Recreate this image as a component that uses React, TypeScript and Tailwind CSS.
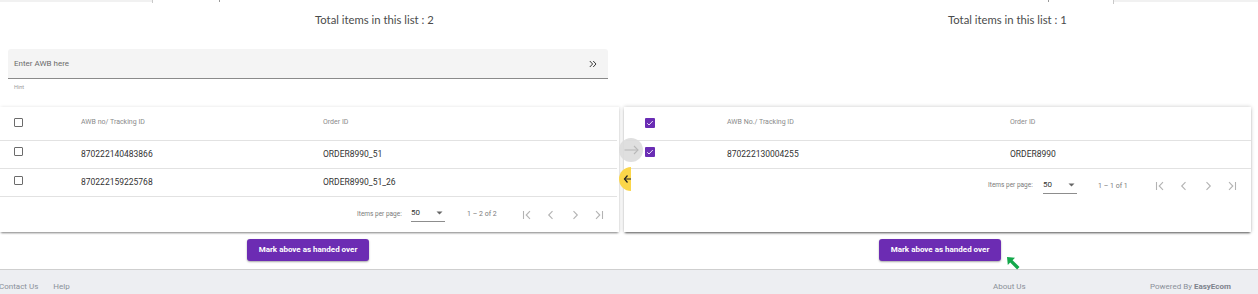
import React from "react";

const roboto = { fontFamily: "Roboto, 'Liberation Sans', sans-serif" };

function FirstIcon() {
  return (
    <svg width="10" height="10" viewBox="0 0 10 10" fill="none" stroke="#b3b3b3" strokeWidth="1.1">
      <path d="M1.5 1v8" />
      <path d="M8 1.2L4.2 5 8 8.8" />
    </svg>
  );
}
function PrevIcon() {
  return (
    <svg width="10" height="10" viewBox="0 0 10 10" fill="none" stroke="#b3b3b3" strokeWidth="1.1">
      <path d="M6.5 1.2L2.7 5 6.5 8.8" />
    </svg>
  );
}
function NextIcon() {
  return (
    <svg width="10" height="10" viewBox="0 0 10 10" fill="none" stroke="#b3b3b3" strokeWidth="1.1">
      <path d="M3.5 1.2L7.3 5 3.5 8.8" />
    </svg>
  );
}
function LastIcon() {
  return (
    <svg width="10" height="10" viewBox="0 0 10 10" fill="none" stroke="#b3b3b3" strokeWidth="1.1">
      <path d="M2 1.2L5.8 5 2 8.8" />
      <path d="M8.5 1v8" />
    </svg>
  );
}

function Box({ checked }: { checked?: boolean }) {
  if (checked) {
    return (
      <div className="w-[10px] h-[10px] rounded-[1px] bg-[#6a2db4] flex items-center justify-center">
        <svg width="8" height="8" viewBox="0 0 8 8" fill="none" stroke="#e8dcf7" strokeWidth="1">
          <path d="M1.2 4.2L3 6 6.8 2" />
        </svg>
      </div>
    );
  }
  return <div className="w-[9px] h-[9px] rounded-[1px] border-[1.3px] border-[#6b6b6b] bg-white" />;
}

function Paginator({ range, itemsW, selW, gapW, rangeW }: { range: string; itemsW: number; selW: number; gapW: number; rangeW: number }) {
  return (
    <div className="flex items-center text-[6.5px] text-[#7a7a7a]" style={roboto}>
      <div style={{ width: itemsW }}>Items per page:</div>
      <div className="flex flex-col" style={{ width: selW }}>
        <div className="flex items-center justify-between pr-[2px]">
          <span className="text-[8px] text-[#333]">50</span>
          <svg width="7" height="4" viewBox="0 0 7 4"><path d="M0.5 0.5h6L3.5 3.5z" fill="#666" /></svg>
        </div>
        <div className="h-px bg-[#8d8d8d] mt-[2px]" />
      </div>
      <div style={{ width: gapW }} />
      <div className="text-[7px] text-[#7a7a7a]" style={{ width: rangeW }}>{range}</div>
      <div className="w-[24px] flex justify-center"><FirstIcon /></div>
      <div className="w-[24px] flex justify-center"><PrevIcon /></div>
      <div className="w-[24px] flex justify-center"><NextIcon /></div>
      <div className="w-[24px] flex justify-center"><LastIcon /></div>
    </div>
  );
}

function PurpleButton() {
  return (
    <button
      className="w-[122px] h-[22px] rounded-[3px] bg-[#6c2cb3] text-white text-[8px] font-bold shadow-[0_1px_2px_rgba(0,0,0,0.35)] flex items-center justify-center"
      style={roboto}
    >
      Mark above as handed over
    </button>
  );
}

export default function App() {
  const titleFont = { fontFamily: "Lato, 'Noto Sans', sans-serif" };
  return (
    <div className="relative w-[1258px] h-[294px] overflow-hidden bg-white">
      {/* top remnants */}
      <div className="flex items-start h-[4px]">
        <div className="w-[152px] h-[2px] bg-[#f1f1f1]" />
        <div className="w-px h-[3px] bg-[#c9c9c9]" />
        <div className="w-[66px]" />
        <div className="w-px h-[2px] bg-[#9a9a9a]" />
        <div className="w-[828px]" />
        <div className="w-px h-[2px] bg-[#9a9a9a]" />
        <div className="w-[64px]" />
        <div className="w-px h-[4px] bg-[#c9c9c9]" />
        <div className="flex-1 h-[2px] bg-[#f1f1f1]" />
      </div>

      <div className="flex">
        {/* left column */}
        <div className="w-[623px] flex flex-col">
          <div className="h-[32px] flex items-center pl-[315px] text-[11.3px] text-[#4b4b4b]" style={titleFont}>
            Total items in this list : 2
          </div>
          <div
            className="mt-[13px] ml-[8px] w-[600px] h-[30px] bg-[#f4f4f4] rounded-t-[3px] border-b border-[#8a8a8a] flex items-center justify-between pl-[6px] pr-[11px]"
            style={roboto}
          >
            <span className="text-[8px] text-[#6b6b6b]">Enter AWB here</span>
            <svg width="8" height="8" viewBox="0 0 8 8" fill="none" stroke="#3a3a3a" strokeWidth="1">
              <path d="M0.8 1L3.6 4 0.8 7" />
              <path d="M4.2 1L7 4 4.2 7" />
            </svg>
          </div>
          <div className="h-[28px] pl-[14px] pt-[4px] text-[5.5px] text-[#9a9a9a]" style={roboto}>
            Hint
          </div>
          {/* left table */}
          <div
            className="w-[619px] h-[125px] bg-white shadow-[0_2px_2px_-1px_rgba(0,0,0,0.45),1px_0_3px_rgba(0,0,0,0.12)] flex flex-col"
            style={roboto}
          >
            <div className="h-[34px] flex items-center pb-[2px] border-b border-[#e2e2e2] mr-[2px]">
              <div className="w-[81px] pl-[14px]"><Box /></div>
              <div className="w-[242px] text-[7px] text-[#8a8a8a]">AWB no/ Tracking ID</div>
              <div className="text-[7px] text-[#8a8a8a]">Order ID</div>
            </div>
            <div className="h-[28px] flex items-center border-b border-[#e2e2e2] mr-[2px]">
              <div className="w-[81px] pl-[14px] mb-[6px]"><Box /></div>
              <div className="w-[242px] text-[8.5px] text-[#333]">870222140483866</div>
              <div className="text-[8.5px] text-[#333]">ORDER8990_51</div>
            </div>
            <div className="h-[28px] flex items-center border-b border-[#e2e2e2] mr-[2px]">
              <div className="w-[81px] pl-[14px] mb-[5px]"><Box /></div>
              <div className="w-[242px] text-[8.5px] text-[#333]">870222159225768</div>
              <div className="text-[8.5px] text-[#333]">ORDER8990_51_26</div>
            </div>
            <div className="flex-1 flex items-center pl-[357px]">
              <Paginator range="1 – 2 of 2" itemsW={54} selW={34} gapW={22} rangeW={48} />
            </div>
          </div>
          <div className="mt-[7px] ml-[247px]">
            <PurpleButton />
          </div>
        </div>

        {/* right column */}
        <div className="flex-1 flex flex-col">
          <div className="h-[32px] flex items-center pl-[325px] text-[11.3px] text-[#4b4b4b]" style={titleFont}>
            Total items in this list : 1
          </div>
          <div className="h-[71px]" />
          <div
            className="relative z-10 ml-px w-[627px] h-[125px] bg-white shadow-[0_2px_2px_-1px_rgba(0,0,0,0.6),0_0_4px_rgba(0,0,0,0.22)] flex flex-col"
            style={roboto}
          >
            <div className="h-[34px] flex items-center pb-[2px] border-b border-[#e2e2e2] ml-[2px]">
              <div className="w-[101px] pl-[19px]"><Box checked /></div>
              <div className="w-[283px] text-[7px] text-[#8a8a8a]">AWB No./ Tracking ID</div>
              <div className="text-[7px] text-[#8a8a8a]">Order ID</div>
            </div>
            <div className="h-[28px] flex items-center border-b border-[#e2e2e2] ml-[2px]">
              <div className="w-[101px] pl-[19px] mb-[6px]"><Box checked /></div>
              <div className="w-[283px] text-[8.5px] text-[#333]">870222130004255</div>
              <div className="text-[8.5px] text-[#333]">ORDER8990</div>
            </div>
            <div className="h-[34px] flex items-center pl-[364px]">
              <Paginator range="1 – 1 of 1" itemsW={55} selW={34} gapW={21} rangeW={50} />
            </div>
          </div>
          <div className="mt-[7px] ml-[256px]">
            <PurpleButton />
          </div>
        </div>
      </div>

      {/* footer */}
      <div className="mt-[8px] h-[26px] border-t border-[#cfcfcf] bg-[#edeef2] flex items-start pt-[12px] text-[8px] leading-[10px] text-[#8b9099]" style={roboto}>
        <div className="w-[994px] flex -ml-[1px]">
          <span>Contact Us</span>
          <span className="ml-[15px]">Help</span>
        </div>
        <div className="w-[157px]">About Us</div>
        <div>
          Powered By <span className="font-bold text-[#7d838d]">EasyEcom</span>
        </div>
      </div>

      {/* overlays: move buttons */}
      <div className="absolute left-[619px] top-[167px] z-20 w-[12px] h-[24px] rounded-l-full bg-[#fbd64a] flex items-center justify-end overflow-hidden">
        <svg width="8" height="10" viewBox="0 0 8 10" fill="none" stroke="#222" strokeWidth="1.2">
          <path d="M4.5 1.5L1.5 5 4.5 8.5" />
          <path d="M1.5 5H8" />
        </svg>
      </div>
      <div className="absolute left-[619px] top-[138px] z-20 w-[24px] h-[24px] rounded-full bg-[#dcdcdc]/90 flex items-center justify-center">
        <svg width="15" height="10" viewBox="0 0 15 10" fill="none" stroke="#b9b9b9" strokeWidth="1.1">
          <path d="M0.5 5H14" />
          <path d="M10 1L14 5 10 9" />
        </svg>
      </div>
      {/* green annotation arrow */}
      <svg className="absolute left-[1005px] top-[255px] z-20" width="17" height="17" viewBox="0 0 17 17">
        <path d="M2 2 L10 2.8 L7.6 5.2 L14.5 12.1 L12.1 14.5 L5.2 7.6 L2.8 10 Z" fill="#14a84b" />
      </svg>
    </div>
  );
}
